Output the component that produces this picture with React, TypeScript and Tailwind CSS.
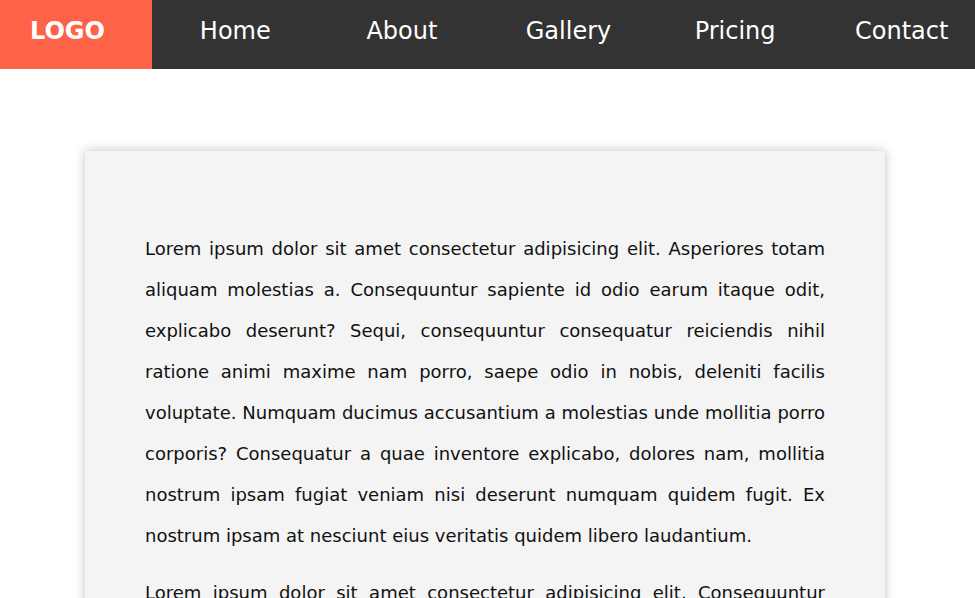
import React from "react";

const items = ["Home", "About", "Gallery", "Pricing", "Contact"];

const p1 =
  "Lorem ipsum dolor sit amet consectetur adipisicing elit. Asperiores totam aliquam molestias a. Consequuntur sapiente id odio earum itaque odit, explicabo deserunt? Sequi, consequuntur consequatur reiciendis nihil ratione animi maxime nam porro, saepe odio in nobis, deleniti facilis voluptate. Numquam ducimus accusantium a molestias unde mollitia porro corporis? Consequatur a quae inventore explicabo, dolores nam, mollitia nostrum ipsam fugiat veniam nisi deserunt numquam quidem fugit. Ex nostrum ipsam at nesciunt eius veritatis quidem libero laudantium.";
const p2 =
  "Lorem ipsum dolor sit amet consectetur adipisicing elit. Consequuntur sapiente id odio earum itaque odit, explicabo deserunt? Sequi, consequuntur consequatur reiciendis nihil ratione animi maxime nam porro, saepe odio in nobis, deleniti facilis voluptate. Numquam ducimus accusantium a molestias unde mollitia porro corporis?";

export default function App() {
  return (
    <div
      className="w-[975px] h-[598px] overflow-hidden bg-white"
      style={{ fontFamily: '"DejaVu Sans", Verdana, sans-serif' }}
    >
      <nav className="flex h-[69px] bg-[#333333] overflow-hidden">
        <div className="w-[152px] shrink-0 bg-[#ff6347] flex justify-start pl-[30px] pt-[19px] text-white font-bold text-[24px] leading-[24px]">
          LOGO
        </div>
        {items.map((t) => (
          <div
            key={t}
            className="w-[166.6px] shrink-0 flex justify-center pt-[19px] text-white text-[24px] leading-[24px]"
          >
            {t}
          </div>
        ))}
      </nav>
      <div className="flex justify-center pr-[5px]">
        <div className="mt-[82px] w-[800px] bg-[#f4f4f4] shadow-[0_0_10px_rgba(0,0,0,0.25)] px-[60px] pt-[77px] pb-[60px]">
          <p className="text-[18px] leading-[41px] text-justify text-[#111111] mb-4">{p1}</p>
          <p className="text-[18px] leading-[41px] text-justify text-[#111111]">{p2}</p>
        </div>
      </div>
    </div>
  );
}
